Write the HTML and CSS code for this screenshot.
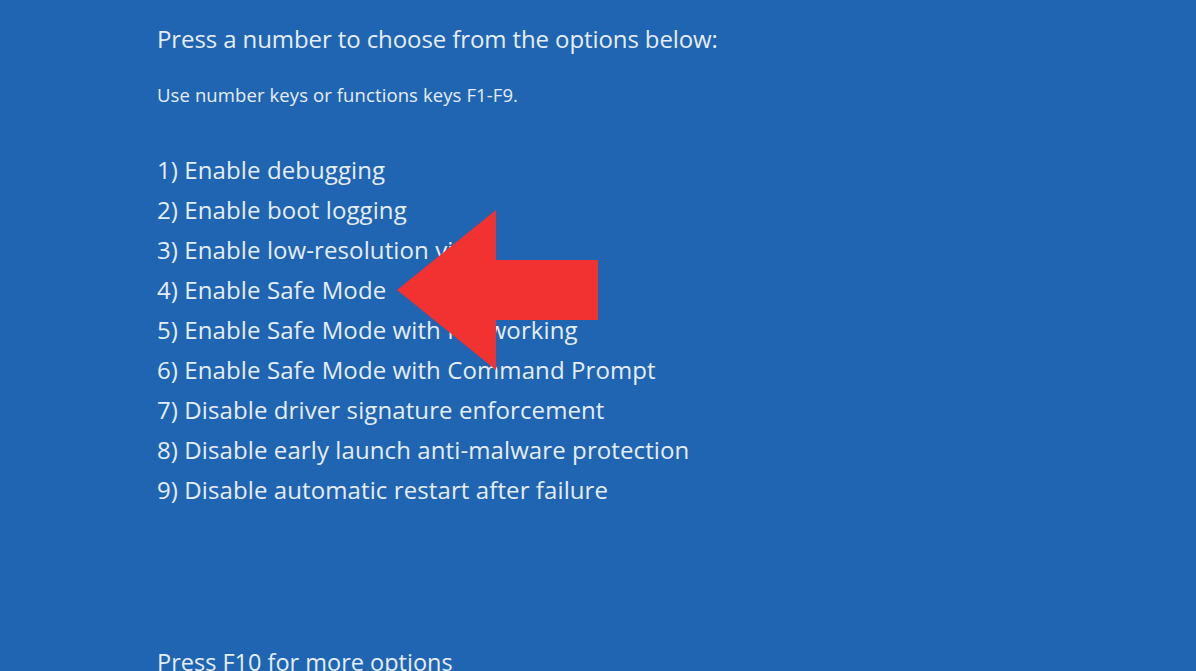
FILE: index.html
```html
<!DOCTYPE html>
<html>
<head>
<meta charset="utf-8">
<link rel="stylesheet" href="styles.css">
</head>
<body>
<div class="screen">
  <h1 class="title">Press a number to choose from the options below:</h1>
  <p class="hint">Use number keys or functions keys F1-F9.</p>
  <ol class="options">
    <li>1) Enable debugging</li>
    <li>2) Enable boot logging</li>
    <li>3) Enable low-resolution video</li>
    <li>4) Enable Safe Mode</li>
    <li>5) Enable Safe Mode with Networking</li>
    <li>6) Enable Safe Mode with Command Prompt</li>
    <li>7) Disable driver signature enforcement</li>
    <li>8) Disable early launch anti-malware protection</li>
    <li>9) Disable automatic restart after failure</li>
  </ol>
  <p class="more">Press F10 for more options</p>
  <svg class="arrow" width="1196" height="671" viewBox="0 0 1196 671">
    <polygon points="397,290 496,210 496,260 598,260 598,320 496,320 496,370" fill="#f23131"/>
  </svg>
</div>
</body>
</html>
```
FILE: styles.css
```css
html, body {
  margin: 0;
  padding: 0;
  background: #1f65b2;
  overflow: hidden;
}
.screen {
  position: relative;
  width: 1196px;
  height: 671px;
  padding-left: 157px;
  box-sizing: border-box;
  font-family: "Open Sans", "Noto Sans", sans-serif;
  color: #e6edf6;
}
.title {
  margin: 0;
  padding-top: 22px;
  font-size: 24px;
  font-weight: 400;
  line-height: 34px;
  letter-spacing: -0.1px;
}
.hint {
  margin: 0;
  padding-top: 27px;
  font-size: 18.5px;
  line-height: 24px;
  letter-spacing: 0.1px;
}
.options {
  list-style: none;
  margin: 0;
  padding: 0;
  padding-top: 43px;
}
.options li {
  font-size: 24px;
  line-height: 40px;
  letter-spacing: 0.1px;
}
.more {
  margin: 0;
  padding-top: 135px;
  font-size: 23.5px;
  line-height: 34px;
}
.arrow {
  position: absolute;
  left: 0;
  top: 0;
}
```
